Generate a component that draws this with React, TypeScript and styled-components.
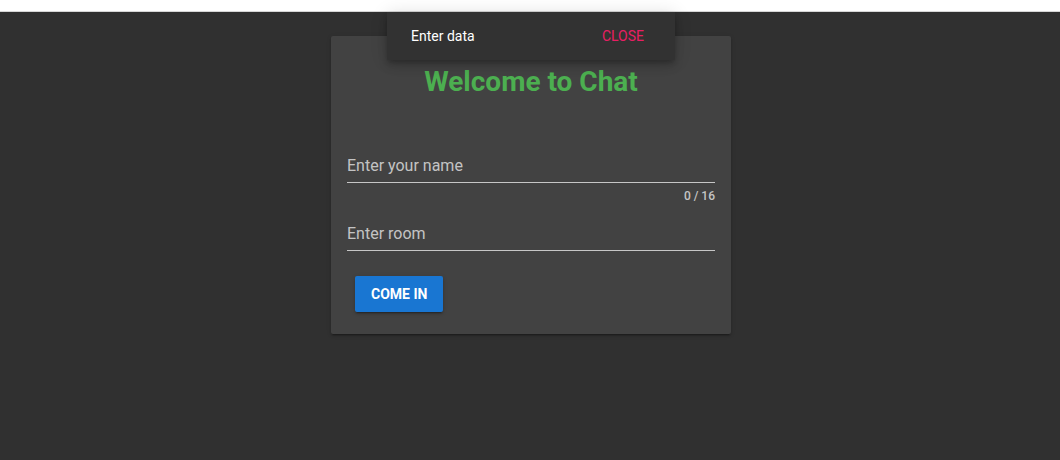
import React from "react";
import styled, { createGlobalStyle } from "styled-components";

const Global = createGlobalStyle`
  html, body { margin: 0; padding: 0; background: #303030; }
  body { font-family: Roboto, "Liberation Sans", sans-serif; -webkit-font-smoothing: antialiased; }
  * { box-sizing: border-box; }
`;

const Page = styled.div`
  width: 100%;
  height: 460px;
  display: flex;
  flex-direction: column;
  position: relative;
  overflow: hidden;
`;

const TopStrip = styled.div`
  height: 12px;
  background: #ffffff;
  border-bottom: 1px solid #d6d6d6;
  flex: none;
`;

const Main = styled.main`
  flex: 1;
  background: #303030;
  display: flex;
  justify-content: center;
  align-items: flex-start;
  padding: 24px 0 0 2px;
`;

const Card = styled.form`
  width: 400px;
  background: #424242;
  border-radius: 2px;
  box-shadow: 0 3px 1px -2px rgba(0,0,0,.2), 0 2px 2px 0 rgba(0,0,0,.14), 0 1px 5px 0 rgba(0,0,0,.12);
  padding: 26px 16px 22px;
  display: flex;
  flex-direction: column;
`;

const Title = styled.h1`
  margin: 0;
  font-size: 28px;
  line-height: 40px;
  font-weight: 700;
  color: #4caf50;
  text-align: center;
`;

const Field = styled.div<{ $top: number }>`
  margin-top: ${(p) => p.$top}px;
  display: flex;
  flex-direction: column;
`;

const InputBox = styled.div`
  height: 33px;
  padding: 6px 0 6px;
  border-bottom: 1px solid rgba(255, 255, 255, 0.7);
  font-size: 16px;
  line-height: 20px;
  color: rgba(255, 255, 255, 0.7);
`;

const Counter = styled.div`
  margin-top: 7px;
  font-size: 12px;
  line-height: 12px;
  font-weight: 500;
  color: rgba(255, 255, 255, 0.7);
  text-align: right;
`;

const Actions = styled.div`
  margin-top: 25px;
  padding-left: 8px;
  display: flex;
`;

const Button = styled.button`
  height: 36px;
  padding: 0 16px;
  border: none;
  border-radius: 2px;
  background: #1976d2;
  color: #ffffff;
  font-family: Roboto, "Liberation Sans", sans-serif;
  font-size: 14px;
  font-weight: 700;
  text-transform: uppercase;
  box-shadow: 0 3px 1px -2px rgba(0,0,0,.2), 0 2px 2px 0 rgba(0,0,0,.14), 0 1px 5px 0 rgba(0,0,0,.12);
  cursor: pointer;
`;

const Snackbar = styled.div`
  position: absolute;
  top: 12px;
  left: 50%;
  transform: translateX(calc(-50% + 1px));
  width: 288px;
  height: 48px;
  background: #323232;
  border-radius: 0 0 2px 2px;
  box-shadow: 0 3px 5px -1px rgba(0,0,0,.2), 0 6px 10px 0 rgba(0,0,0,.14), 0 1px 18px 0 rgba(0,0,0,.12);
  display: flex;
  align-items: center;
  justify-content: space-between;
  padding: 0 31px 0 24px;
  font-size: 14px;
  line-height: 20px;
`;

const SnackText = styled.span`
  color: #ffffff;
`;

const SnackAction = styled.span`
  color: #e91e63;
  text-transform: uppercase;
  font-weight: 400;
`;

export default function App() {
  return (
    <Page>
      <Global />
      <TopStrip />
      <Main>
        <Card>
          <Title>Welcome to Chat</Title>
          <Field $top={48}>
            <InputBox>Enter your name</InputBox>
            <Counter>0 / 16</Counter>
          </Field>
          <Field $top={16}>
            <InputBox>Enter room</InputBox>
          </Field>
          <Actions>
            <Button type="button">Come in</Button>
          </Actions>
        </Card>
      </Main>
      <Snackbar>
        <SnackText>Enter data</SnackText>
        <SnackAction>Close</SnackAction>
      </Snackbar>
    </Page>
  );
}
